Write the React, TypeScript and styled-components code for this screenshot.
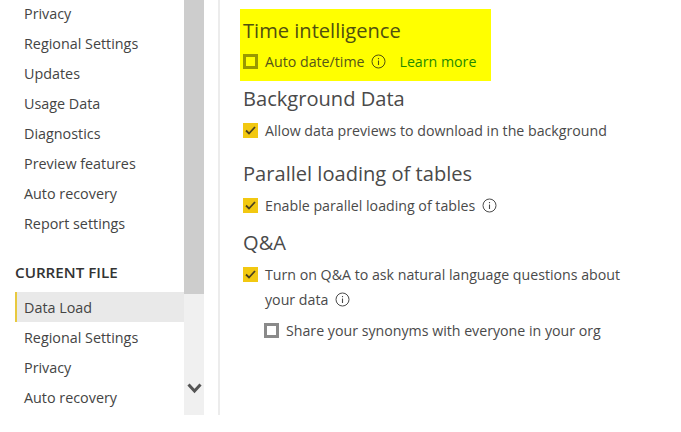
import React from 'react';
import styled, { createGlobalStyle } from 'styled-components';

const GlobalStyle = createGlobalStyle`
  html, body {
    margin: 0;
    padding: 0;
    background: #ffffff;
  }
  body {
    font-family: 'Open Sans', 'Noto Sans', 'Liberation Sans', sans-serif;
    color: #3d3d3d;
  }
`;

const Page = styled.div`
  display: flex;
  width: 681px;
  height: 415px;
  overflow: hidden;
`;

const Sidebar = styled.aside`
  width: 184px;
  height: 415px;
  padding-left: 15px;
  box-sizing: border-box;
  overflow: hidden;
  flex-shrink: 0;
`;

const NavList = styled.ul<{ $top?: number }>`
  list-style: none;
  margin: ${p => p.$top ?? 0}px 0 0;
  padding: 0;
`;

const NavItem = styled.li<{ $active?: boolean }>`
  height: 30px;
  line-height: 32px;
  box-sizing: border-box;
  padding-left: ${p => (p.$active ? 7 : 9)}px;
  font-size: 14.35px;
  color: #444444;
  background: ${p => (p.$active ? '#e9e9e9' : 'transparent')};
  border-left: ${p => (p.$active ? '2px solid #e8c93f' : 'none')};
`;

const SectionLabel = styled.h3`
  margin: 24px 0 10px;
  height: 20px;
  line-height: 20px;
  font-size: 15.2px;
  font-weight: 600;
  color: #333333;
`;

const Scrollbar = styled.div`
  position: relative;
  width: 20px;
  height: 415px;
  background: #f0f0f0;
  flex-shrink: 0;
`;

const Thumb = styled.div`
  width: 100%;
  height: 294px;
  background: #cdcdcd;
`;

const ArrowDown = styled.svg`
  position: absolute;
  left: 3px;
  top: 382px;
  width: 15px;
  height: 12px;
`;

const Content = styled.main`
  margin-left: 14px;
  border-left: 2px solid #ececec;
  padding: 9px 0 0 20px;
  flex: 1;
`;

const Highlight = styled.section`
  width: 251px;
  height: 72px;
  box-sizing: border-box;
  background: #ffff00;
  padding-top: 8px;
`;

const Heading = styled.h2<{ $top?: number; $dark?: boolean }>`
  margin: ${p => p.$top ?? 0}px 0 0 3px;
  height: 28px;
  line-height: 28px;
  font-size: 20.1px;
  font-weight: 400;
  color: ${p => (p.$dark ? '#50500f' : '#4a4a4a')};
`;

const OptionRow = styled.div<{ $top?: number; $indent?: number; $dark?: boolean }>`
  display: flex;
  align-items: center;
  margin: ${p => p.$top ?? 0}px 0 0 ${p => (p.$indent ?? 0) + 3}px;
  height: 25px;
  font-size: 14.2px;
  color: ${p => (p.$dark ? '#55551a' : '#4a4a4a')};
`;

const Box = styled.span<{ $checked?: boolean; $dark?: boolean }>`
  display: inline-flex;
  align-items: center;
  justify-content: center;
  width: 15px;
  height: 15px;
  box-sizing: border-box;
  margin-right: 7px;
  flex-shrink: 0;
  background: ${p => (p.$checked ? '#f2c811' : 'transparent')};
  border: ${p => (p.$checked ? 'none' : `3px solid ${p.$dark ? '#999900' : '#8a8a8a'}`)};
`;

const Check = styled.svg`
  width: 11px;
  height: 11px;
`;

const Continuation = styled.div`
  margin-left: 25px;
  height: 25px;
  line-height: 25px;
  font-size: 14.2px;
  color: #4a4a4a;
  display: flex;
  align-items: center;
`;

const InfoIcon = styled.svg<{ $dark?: boolean }>`
  width: 15px;
  height: 15px;
  margin-left: 7px;
  flex-shrink: 0;
  color: ${p => (p.$dark ? '#50500f' : '#4a4a4a')};
`;

const LearnMore = styled.a`
  margin-left: 13px;
  color: #1f8a00;
  text-decoration: none;
`;

const Info: React.FC<{ dark?: boolean }> = ({ dark }) => (
  <InfoIcon $dark={dark} viewBox="0 0 15 15" fill="none" stroke="currentColor">
    <circle cx="7.5" cy="7.5" r="6.5" strokeWidth="1" />
    <path d="M7.5 6.5v4.5" strokeWidth="1.1" />
    <path d="M7.5 4v1.2" strokeWidth="1.1" />
  </InfoIcon>
);

const CheckBox: React.FC<{ checked?: boolean; dark?: boolean }> = ({ checked, dark }) => (
  <Box $checked={checked} $dark={dark}>
    {checked && (
      <Check viewBox="0 0 11 11" fill="none" stroke="#4a4020" strokeWidth="1.8">
        <path d="M1 5.5 4 8.5 10 2" />
      </Check>
    )}
  </Box>
);

const globalItems = [
  'Privacy',
  'Regional Settings',
  'Updates',
  'Usage Data',
  'Diagnostics',
  'Preview features',
  'Auto recovery',
  'Report settings',
];
const fileItems = ['Data Load', 'Regional Settings', 'Privacy', 'Auto recovery'];

const App: React.FC = () => (
  <>
    <GlobalStyle />
    <Page>
      <Sidebar>
        <NavList $top={-2}>
          {globalItems.map(item => (
            <NavItem key={item}>{item}</NavItem>
          ))}
        </NavList>
        <SectionLabel>CURRENT FILE</SectionLabel>
        <NavList>
          {fileItems.map((item, i) => (
            <NavItem key={item} $active={i === 0}>
              {item}
            </NavItem>
          ))}
        </NavList>
      </Sidebar>
      <Scrollbar>
        <Thumb />
        <ArrowDown viewBox="0 0 15 12" fill="none" stroke="#555555" strokeWidth="3">
          <path d="M1.5 2.5 7.5 9 13.500 2.500" />
        </ArrowDown>
      </Scrollbar>
      <Content>
        <Highlight>
          <Heading $dark>Time intelligence</Heading>
          <OptionRow $top={4} $dark>
            <CheckBox dark />
            Auto date/time
            <Info dark />
            <LearnMore>Learn more</LearnMore>
          </OptionRow>
        </Highlight>
        <Heading $top={4}>Background Data</Heading>
        <OptionRow $top={5}>
          <CheckBox checked />
          Allow data previews to download in the background
        </OptionRow>
        <Heading $top={17}>Parallel loading of tables</Heading>
        <OptionRow $top={5}>
          <CheckBox checked />
          Enable parallel loading of tables
          <Info />
        </OptionRow>
        <Heading $top={11}>Q&amp;A</Heading>
        <OptionRow $top={5}>
          <CheckBox checked />
          Turn on Q&amp;A to ask natural language questions about
        </OptionRow>
        <Continuation>
          your data
          <Info />
        </Continuation>
        <OptionRow $top={6} $indent={21}>
          <CheckBox />
          Share your synonyms with everyone in your org
        </OptionRow>
      </Content>
    </Page>
  </>
);

export default App;
